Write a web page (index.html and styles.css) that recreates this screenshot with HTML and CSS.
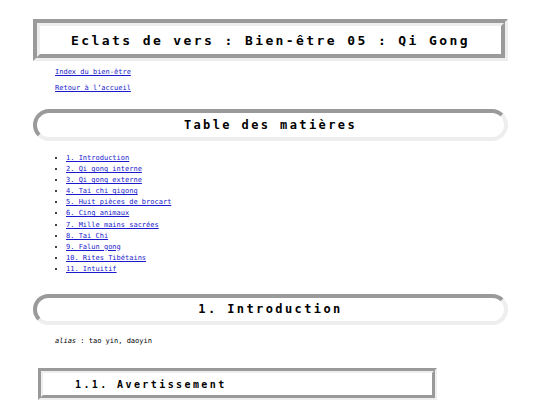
FILE: index.html
```html
<!DOCTYPE html>
<html lang="fr">
<head>
<meta charset="utf-8">
<title>Eclats de vers : Bien-être 05 : Qi Gong</title>
<link rel="stylesheet" href="styles.css">
</head>
<body>
<h1 class="title">Eclats de vers : Bien-être 05 : Qi Gong</h1>
<div class="nav">
  <p><a href="#">Index du bien-être</a></p>
  <p><a href="#">Retour à l’accueil</a></p>
</div>
<h2 class="section toc-title">Table des matières</h2>
<ul class="toc">
  <li><a href="#">1. Introduction</a></li>
  <li><a href="#">2. Qi gong interne</a></li>
  <li><a href="#">3. Qi gong externe</a></li>
  <li><a href="#">4. Tai chi qigong</a></li>
  <li><a href="#">5. Huit pièces de brocart</a></li>
  <li><a href="#">6. Cinq animaux</a></li>
  <li><a href="#">7. Mille mains sacrées</a></li>
  <li><a href="#">8. Tai Chi</a></li>
  <li><a href="#">9. Falun gong</a></li>
  <li><a href="#">10. Rites Tibétains</a></li>
  <li><a href="#">11. Intuitif</a></li>
</ul>
<h2 class="section intro-title">1. Introduction</h2>
<p class="alias"><em>alias</em> : tao yin, daoyin</p>
<h3 class="subsection">1.1. Avertissement</h3>
</body>
</html>
```

FILE: styles.css
```css
html, body {
  background: #ffffff;
}
body {
  margin: 0;
  padding: 19px 32px 20px 33px;
  font-family: "DejaVu Sans Mono", "Liberation Mono", monospace;
  font-size: 7px;
  color: #000;
}
a {
  color: #1a1acc;
  text-decoration: underline;
}
.title {
  margin: 0;
  height: 28px;
  border: 7px groove #eeeeee;
  display: flex;
  align-items: center;
  justify-content: center;
  font-size: 13px;
  font-weight: bold;
  letter-spacing: 2.4px;
}
.nav {
  margin-left: 22px;
}
.nav p {
  margin: 7px 0;
  line-height: 9px;
}
.section {
  margin: 0;
  height: 23.5px;
  border: 4px inset #eeeeee;
  border-radius: 16px;
  display: flex;
  align-items: center;
  justify-content: center;
  font-size: 12px;
  font-weight: bold;
  letter-spacing: 2.4px;
}
.toc-title {
  margin-top: 16px;
}
.toc {
  margin: 12.5px 0 0;
  padding-left: 33px;
  line-height: 11.1px;
}
.intro-title {
  margin-top: 18.5px;
}
.alias {
  margin: 11.5px 0 0 22px;
  line-height: 9px;
}
.subsection {
  margin: 22.5px 0 0 5px;
  width: 357px;
  height: 22px;
  border: 5px groove #eeeeee;
  padding-left: 32px;
  box-sizing: content-box;
  display: flex;
  align-items: center;
  font-size: 10px;
  font-weight: bold;
  letter-spacing: 2.4px;
}
```
